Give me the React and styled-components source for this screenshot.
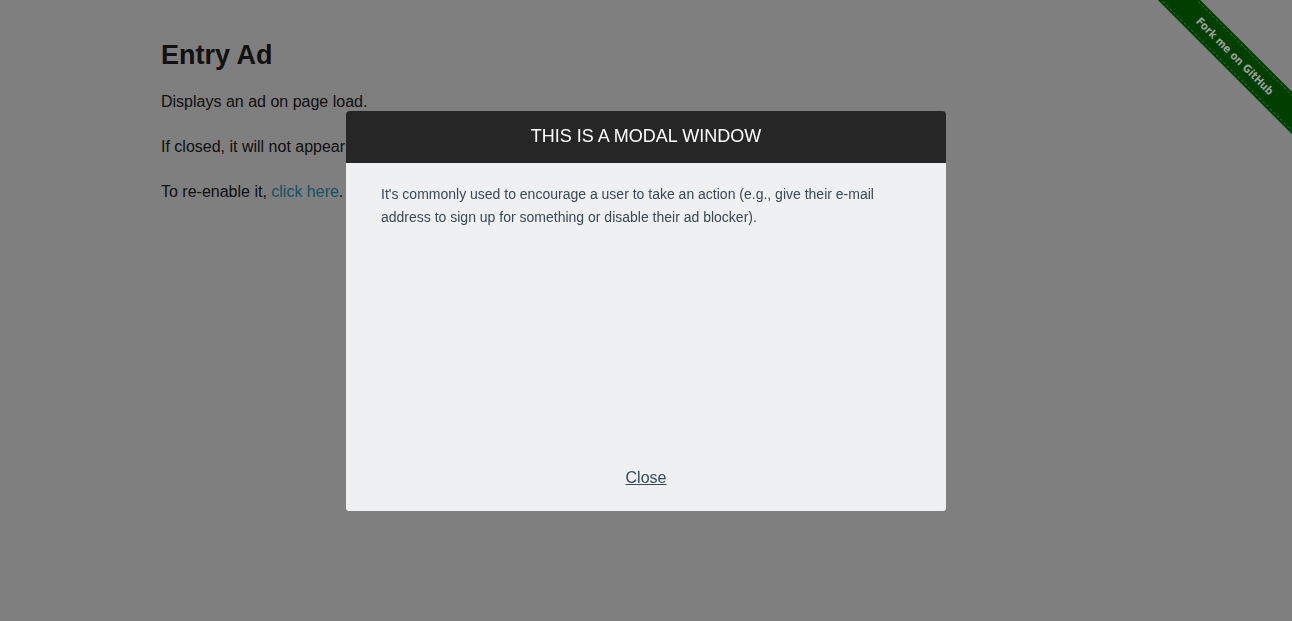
import styled, { createGlobalStyle } from 'styled-components'

const GlobalStyle = createGlobalStyle`
   html, body {
      margin: 0;
      padding: 0;
      background: #fff;
      font-family: 'Liberation Sans', Arial, sans-serif;
      color: #222;
   }
`

function App() {
   return (
      <>
         <GlobalStyle />
         <Page>
            <Row>
               <Title>Entry Ad</Title>
               <Text>Displays an ad on page load.</Text>
               <Text>
                  If closed, it will not appear on subsequent page loads.
               </Text>
               <Text>
                  To re-enable it, <Link href="#">click here</Link>.
               </Text>
            </Row>
         </Page>
         <Overlay>
            <Modal>
               <ModalTitle>THIS IS A MODAL WINDOW</ModalTitle>
               <ModalBody>
                  It's commonly used to encourage a user to take an action
                  (e.g., give their e-mail address to sign up for something or
                  disable their ad blocker).
               </ModalBody>
               <ModalFooter>
                  <CloseLink>Close</CloseLink>
               </ModalFooter>
            </Modal>
         </Overlay>
         <Ribbon>
            <Band>
               <Stitch>Fork me on GitHub</Stitch>
            </Band>
         </Ribbon>
      </>
   )
}

export default App

const Page = styled.div`
   width: 100%;
   min-height: 621px;
   padding-top: 36px;
   box-sizing: border-box;
`
const Row = styled.div`
   width: 1000px;
   margin: 0 auto;
   padding: 0 15px;
   box-sizing: border-box;
`
const Title = styled.h3`
   margin: 0 0 15px;
   font-size: 27px;
   line-height: 38px;
   font-weight: 700;
   color: #222;
`
const Text = styled.p`
   margin: 0 0 19.5px;
   font-size: 16px;
   line-height: 25.6px;
`
const Link = styled.a`
   color: #2ba6cb;
   text-decoration: none;
`
const Ribbon = styled.div`
   position: absolute;
   top: 0;
   right: 0;
   width: 149px;
   height: 149px;
   overflow: hidden;
   z-index: 2;
`
const Band = styled.div`
   position: absolute;
   left: -8px;
   top: 41px;
   width: 200px;
   height: 30px;
   padding: 2px 0;
   box-sizing: border-box;
   background: #003f00;
   transform: rotate(45deg);
`
const Stitch = styled.div`
   height: 26px;
   border-top: 1px dashed rgba(120, 170, 120, 0.35);
   border-bottom: 1px dashed rgba(120, 170, 120, 0.35);
   box-sizing: border-box;
   display: flex;
   align-items: center;
   justify-content: center;
   color: #9c9c9c;
   font-family: 'DejaVu Sans Condensed', 'Liberation Sans', sans-serif;
   font-size: 11px;
   font-weight: 700;
`
const Overlay = styled.div`
   position: fixed;
   inset: 0;
   background: rgba(0, 0, 0, 0.5);
   display: flex;
   align-items: center;
   justify-content: center;
`
const Modal = styled.div`
   width: 600px;
   height: 400px;
   display: flex;
   flex-direction: column;
   background: #eff0f2;
   border-radius: 3px;
   overflow: hidden;
`
const ModalTitle = styled.div`
   height: 52px;
   flex-shrink: 0;
   background: #262626;
   color: #fff;
   font-size: 18px;
   display: flex;
   align-items: center;
   justify-content: center;
`
const ModalBody = styled.p`
   flex: 1;
   margin: 0;
   padding: 20px 35px 0;
   font-size: 14px;
   line-height: 23px;
   color: #3b4856;
`
const ModalFooter = styled.div`
   padding: 0 0 24px;
   display: flex;
   justify-content: center;
`
const CloseLink = styled.p`
   margin: 0;
   font-size: 16px;
   line-height: 18px;
   color: #34495e;
   text-decoration: underline;
   cursor: pointer;
`
